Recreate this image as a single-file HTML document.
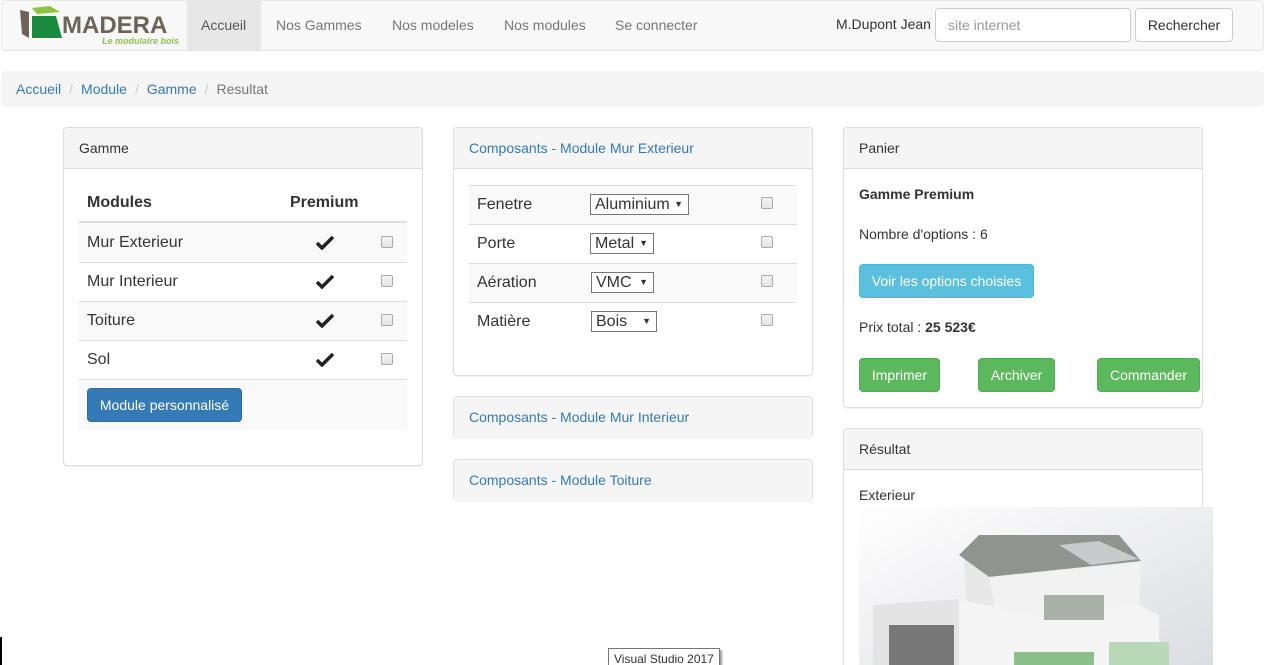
<!DOCTYPE html>
<html style="width:1265px;height:665px;overflow:hidden"><head><meta charset="utf-8"><style>
*{box-sizing:border-box;margin:0;padding:0}
body{width:1265px;height:665px;overflow:hidden;background:#fff;font-family:"Liberation Sans",Arial,sans-serif;font-size:14px;color:#333;position:relative}
.a{position:absolute}
.nav{left:1px;top:0;width:1263px;height:51px;background:#f8f8f8;border:1px solid #e7e7e7;border-radius:4px}
.nl{color:#777;font-size:14px;top:17px}
.bc{left:1px;top:71px;width:1263px;height:36px;background:#f5f5f5;border-radius:4px}
.panel{border:1px solid #ddd;border-radius:4px;background:#fff;box-shadow:0 1px 1px rgba(0,0,0,.05)}
.ph{position:absolute;left:0;top:0;right:0;height:41px;background:#f5f5f5;border-bottom:1px solid #ddd;padding:12px 15px;border-radius:3px 3px 0 0}
.link{color:#337ab7}
.row{position:absolute;border-top:1px solid #ddd}
.cb{position:absolute;width:12px;height:12px;border:1px solid #aaa;border-radius:2px;background:linear-gradient(#f4f4f4,#e4e4e4)}
.sel{position:absolute;height:21px;border:1px solid #767676;background:#fff;font-size:16px;padding:0 4px;line-height:19px}
.sel:after{content:"▼";position:absolute;right:5px;top:0;font-size:9px}
.btn{position:absolute;border-radius:4px;color:#fff;text-align:center;font-size:14px;line-height:32px;height:34px}
.g{background:#5cb85c;border:1px solid #4cae4c}
.t{font-size:16px}
.ck{position:absolute;left:237px}
</style></head><body>
<div class="a nav"></div>
<svg class="a" style="left:18px;top:4px" width="46" height="40"><polygon points="2,6 11,8 11,34 4,30" fill="#6e6358"/><polygon points="14,4 32,2 42,8 19,10" fill="#8cc63f"/><polygon points="14,12 38,12 44,34 14,34" fill="#1a8a3f"/></svg>
<div class="a" style="left:62px;top:12px;font-size:24px;font-weight:bold;color:#6e6358;letter-spacing:0">MADERA</div>
<div class="a" style="left:102px;top:36px;font-size:9px;font-style:italic;font-weight:bold;color:#8cc63f">Le modulaire bois</div>
<div class="a" style="left:187px;top:1px;width:74px;height:49px;background:#e7e7e7"></div>
<div class="a nl" style="left:201px;color:#555">Accueil</div>
<div class="a nl" style="left:276px">Nos Gammes</div>
<div class="a nl" style="left:392px">Nos modeles</div>
<div class="a nl" style="left:504px">Nos modules</div>
<div class="a nl" style="left:615px">Se connecter</div>
<div class="a" style="left:836px;top:16px;color:#333">M.Dupont Jean</div>
<div class="a" style="left:935px;top:8px;width:196px;height:34px;border:1px solid #ccc;border-radius:4px;padding:8px 12px;color:#999;background:#fff">site internet</div>
<div class="a" style="left:1135px;top:8px;width:98px;height:34px;border:1px solid #ccc;border-radius:4px;text-align:center;line-height:32px;background:#fff">Rechercher</div>

<div class="a bc"></div>
<div class="a" style="left:16px;top:81px"><span class="link">Accueil</span><span style="color:#ccc;padding:0 8px">/</span><span class="link">Module</span><span style="color:#ccc;padding:0 8px">/</span><span class="link">Gamme</span><span style="color:#ccc;padding:0 8px">/</span><span style="color:#777">Resultat</span></div>

<div class="a panel" style="left:63px;top:127px;width:360px;height:339px">
<div class="ph">Gamme</div>
<div class="a" style="left:15px;top:52px;width:328px;height:250px">
<div class="a t" style="left:8px;top:14px;font-weight:bold">Modules</div>
<div class="a t" style="left:211px;top:14px;font-weight:bold">Premium</div>
<div class="row" style="left:0;top:41px;width:328px;height:40px;border-top:2px solid #ddd;background:#f9f9f9"></div>
<div class="row" style="left:0;top:82px;width:328px;height:39px"></div>
<div class="row" style="left:0;top:121px;width:328px;height:39px;background:#f9f9f9"></div>
<div class="row" style="left:0;top:160px;width:328px;height:39px"></div>
<div class="row" style="left:0;top:199px;width:328px;height:51px;background:#f9f9f9"></div>
<div class="a t" style="left:8px;top:54px">Mur Exterieur</div>
<div class="a t" style="left:8px;top:93px">Mur Interieur</div>
<div class="a t" style="left:8px;top:132px">Toiture</div>
<div class="a t" style="left:8px;top:171px">Sol</div>
<svg class="ck" style="top:55px" width="18" height="15"><path d="M1 8 L6 13 L17 2" stroke="#222" stroke-width="3.5" fill="none"/></svg>
<svg class="ck" style="top:94px" width="18" height="15"><path d="M1 8 L6 13 L17 2" stroke="#222" stroke-width="3.5" fill="none"/></svg>
<svg class="ck" style="top:133px" width="18" height="15"><path d="M1 8 L6 13 L17 2" stroke="#222" stroke-width="3.5" fill="none"/></svg>
<svg class="ck" style="top:172px" width="18" height="15"><path d="M1 8 L6 13 L17 2" stroke="#222" stroke-width="3.5" fill="none"/></svg>
<div class="cb" style="left:302px;top:56px"></div><div class="cb" style="left:302px;top:95px"></div><div class="cb" style="left:302px;top:134px"></div><div class="cb" style="left:302px;top:173px"></div>
<div class="btn" style="left:8px;top:208px;width:155px;background:#337ab7;border:1px solid #2e6da4">Module personnalisé</div>
</div></div>

<div class="a panel" style="left:453px;top:127px;width:360px;height:249px">
<div class="ph link">Composants - Module Mur Exterieur</div>
<div class="row" style="left:15px;top:57px;width:328px;height:39px;background:#f9f9f9"></div>
<div class="row" style="left:15px;top:96px;width:328px;height:39px"></div>
<div class="row" style="left:15px;top:135px;width:328px;height:39px;background:#f9f9f9"></div>
<div class="row" style="left:15px;top:174px;width:328px;height:39px"></div>
<div class="a t" style="left:23px;top:68px">Fenetre</div>
<div class="a t" style="left:23px;top:107px">Porte</div>
<div class="a t" style="left:23px;top:146px">Aération</div>
<div class="a t" style="left:23px;top:185px">Matière</div>
<div class="sel" style="left:136px;top:66px;width:99px">Aluminium</div>
<div class="sel" style="left:136px;top:105px;width:64px">Metal</div>
<div class="sel" style="left:137px;top:144px;width:63px">VMC</div>
<div class="sel" style="left:137px;top:183px;width:66px">Bois</div>
<div class="cb" style="left:307px;top:69px"></div><div class="cb" style="left:307px;top:108px"></div><div class="cb" style="left:307px;top:147px"></div><div class="cb" style="left:307px;top:186px"></div>
</div>
<div class="a panel" style="left:453px;top:396px;width:360px;height:42px"><div class="ph link" style="border-bottom:none">Composants - Module Mur Interieur</div></div>
<div class="a panel" style="left:453px;top:459px;width:360px;height:42px"><div class="ph link" style="border-bottom:none">Composants - Module Toiture</div></div>

<div class="a panel" style="left:843px;top:127px;width:360px;height:281px">
<div class="ph">Panier</div>
<div class="a" style="left:15px;top:58px;font-weight:bold">Gamme Premium</div>
<div class="a" style="left:15px;top:98px">Nombre d'options : 6</div>
<div class="btn" style="left:15px;top:136px;width:175px;background:#5bc0de;border:1px solid #46b8da">Voir les options choisies</div>
<div class="a" style="left:15px;top:191px">Prix total : <b>25 523€</b></div>
<div class="btn g" style="left:15px;top:230px;width:81px">Imprimer</div>
<div class="btn g" style="left:134px;top:230px;width:77px">Archiver</div>
<div class="btn g" style="left:253px;top:230px;width:103px">Commander</div>
</div>
<div class="a panel" style="left:843px;top:428px;width:360px;height:237px;border-bottom:none;border-radius:4px 4px 0 0">
<div class="ph">Résultat</div>
<div class="a" style="left:15px;top:58px">Exterieur</div>
</div>
<svg class="a" style="left:859px;top:507px" width="354" height="158">
<defs><linearGradient id="bg" x1="0" y1="0" x2="1" y2="1"><stop offset="0" stop-color="#fff"/><stop offset="1" stop-color="#dcdde2"/></linearGradient></defs>
<rect width="354" height="158" fill="url(#bg)"/>
<polygon points="100,48 120,28 260,28 282,54 130,70" fill="#8f9490"/>
<polygon points="200,38 240,34 280,52 232,58" fill="#c8cacc"/>
<polygon points="105,52 130,70 140,118 108,112" fill="#e8e8e8"/>
<polygon points="130,70 282,56 280,108 140,118" fill="#f2f2f2"/>
<polygon points="14,98 100,92 100,158 14,158" fill="#e4e4e4"/>
<rect x="30" y="118" width="65" height="40" fill="#777"/>
<polygon points="100,92 180,110 280,98 300,108 300,158 100,158" fill="#f4f4f4"/>
<rect x="185" y="88" width="60" height="25" fill="#a8b0a8"/>
<rect x="155" y="145" width="80" height="13" fill="#8bbf8b"/>
<rect x="250" y="135" width="60" height="23" fill="#b8d8b8"/>
</svg>
<div class="a" style="left:0;top:637px;width:2px;height:28px;background:#000"></div>
<div class="a" style="left:608px;top:648px;height:20px;border:1px solid #767676;background:#fff;font-size:12px;padding:3px 5px;white-space:nowrap;box-shadow:2px 2px 2px #999">Visual Studio 2017</div>
</body></html>
